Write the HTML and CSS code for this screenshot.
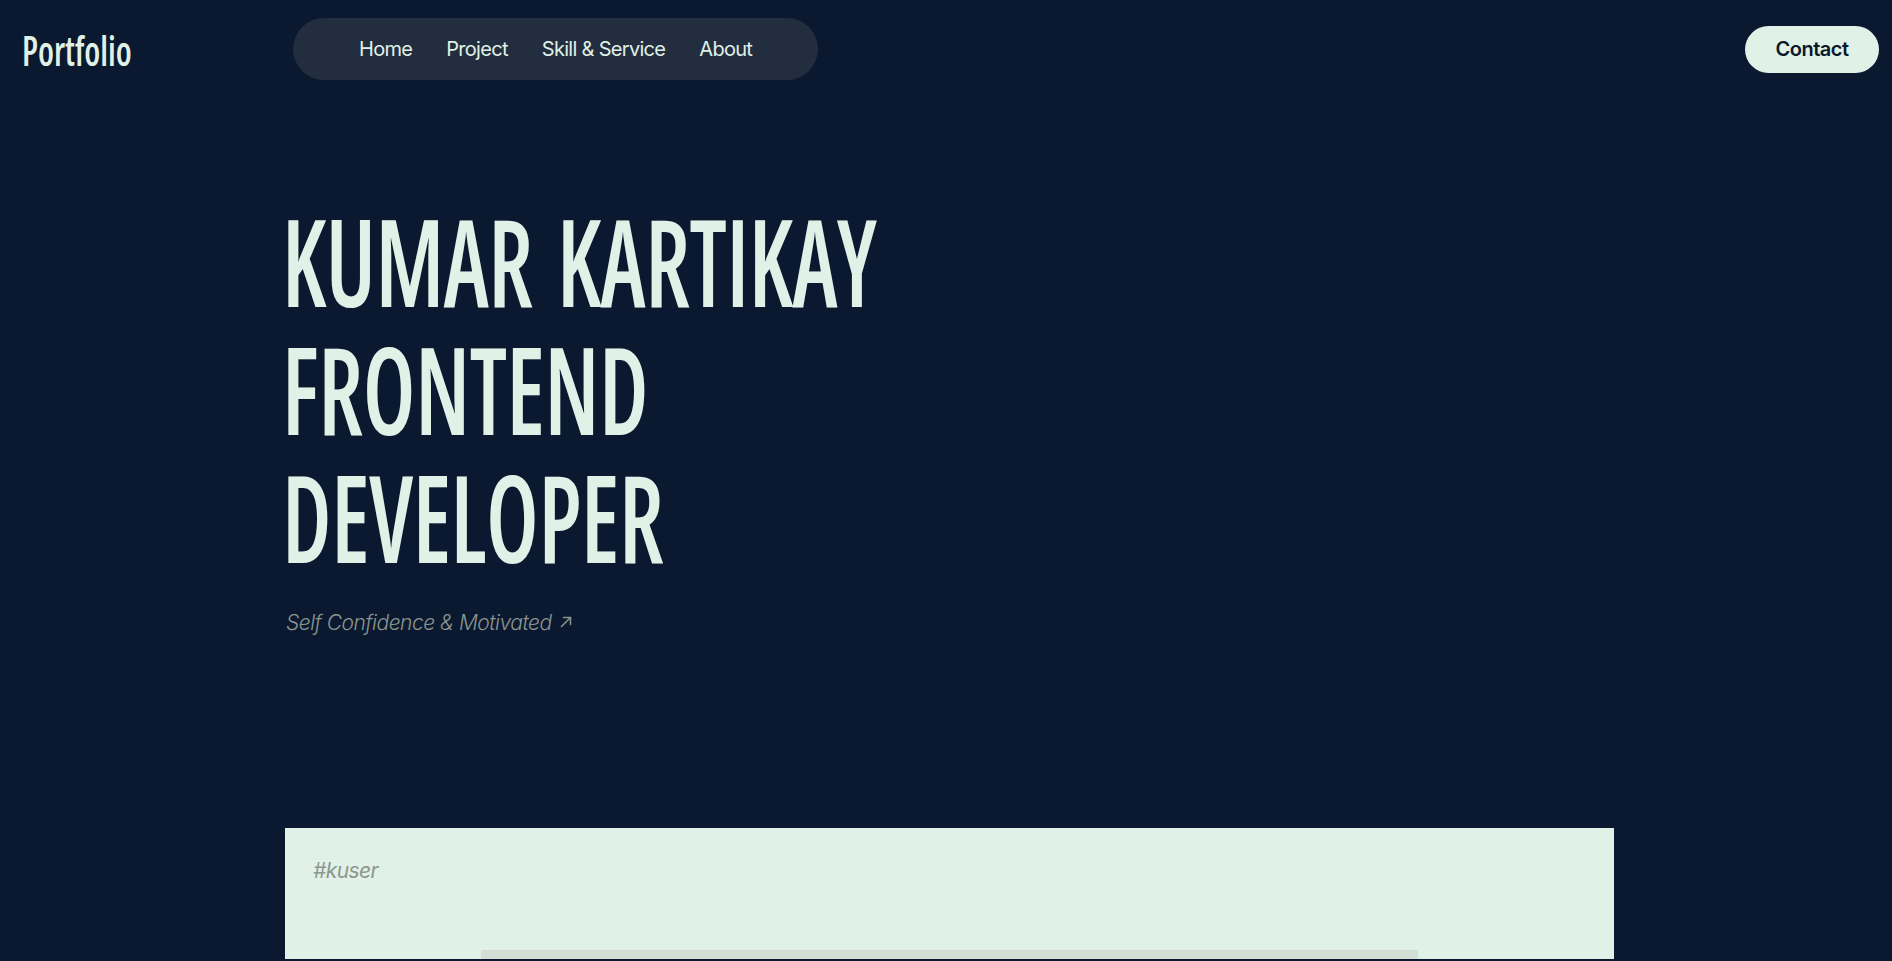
FILE: index.html
```html
<!DOCTYPE html>
<html lang="en">
<head>
<meta charset="utf-8">
<title>Portfolio</title>
<link rel="stylesheet" href="styles.css">
</head>
<body>
<header class="topbar">
  <div class="brand"><span class="brand-text">Portfolio</span></div>
  <nav class="nav-pill">
    <a class="nav-link" href="#">Home</a>
    <a class="nav-link" href="#">Project</a>
    <a class="nav-link" href="#">Skill &amp; Service</a>
    <a class="nav-link" href="#">About</a>
  </nav>
  <a class="contact-btn" href="#">Contact</a>
</header>
<main class="page">
  <section class="hero">
    <h1 class="hero-title">
      <span class="hero-line">KUMAR KARTIKAY</span>
      <span class="hero-line">FRONTEND</span>
      <span class="hero-line">DEVELOPER</span>
    </h1>
    <p class="hero-tag">Self Confidence &amp; Motivated
      <svg class="arrow" width="12" height="12" viewBox="0 0 12 12" fill="none" stroke="currentColor" stroke-width="1.5" stroke-linecap="round" stroke-linejoin="round"><path d="M1.5 10.5 L10.5 1.5"/><path d="M3.5 1.5 H10.5 V8.5"/></svg>
    </p>
  </section>
  <section class="card">
    <p class="card-tag">#kuser</p>
    <div class="card-frame"></div>
  </section>
</main>
</body>
</html>
```
FILE: styles.css
```css
html, body {
  margin: 0;
  padding: 0;
  background: #0a192f;
  height: 100%;
  overflow: hidden;
}
body {
  color: #e0f1e7;
  font-family: Inter, "Liberation Sans", sans-serif;
}
a { color: inherit; text-decoration: none; }

.topbar {
  display: flex;
  align-items: center;
  padding: 18px 13px 0 22px;
  height: 62px;
}
.brand {
  width: 271px;
  flex-shrink: 0;
  font-family: "Open Sans", sans-serif;
  font-stretch: 75%;
  font-weight: 600;
  font-size: 42px;
  color: #e0f1e7;
  line-height: 1;
  padding-top: 2px;
}
.brand-text {
  display: inline-block;
  transform: scaleX(0.82);
  transform-origin: left center;
}
.nav-pill {
  display: flex;
  align-items: center;
  gap: 34px;
  height: 62px;
  padding: 0 66px;
  background: #222e3f;
  border-radius: 31px;
}
.nav-link {
  font-size: 20px;
  letter-spacing: -0.7px;
  color: #e0f1e7;
}
.contact-btn {
  margin-left: auto;
  display: flex;
  align-items: center;
  justify-content: center;
  width: 134px;
  height: 47px;
  border-radius: 24px;
  background: #e0f1e7;
  color: #0b192c;
  font-size: 20px;
  font-weight: 600;
  letter-spacing: -0.5px;
}

.page {
  width: 1329px;
  margin-left: 285px;
}
.hero {
  padding-top: 116px;
}
.hero-title {
  margin: 0 0 0 -3px;
  font-family: "Open Sans", sans-serif;
  font-stretch: 75%;
  font-weight: 600;
  font-size: 122px;
  line-height: 128px;
  letter-spacing: -0.5px;
  word-spacing: 10px;
  color: #e0f1e7;
  transform: scaleX(0.76);
  transform-origin: left top;
}
.hero-line { display: block; white-space: nowrap; }
.hero-tag {
  margin: 28px 0 0 1px;
  display: flex;
  align-items: center;
  gap: 8px;
  font-size: 21px;
  line-height: 30px;
  font-style: italic;
  font-weight: 300;
  color: #8a958f;
  letter-spacing: -0.5px;
}
.arrow { margin-top: -2px; }

.card {
  margin-top: 190px;
  background: #e0f1e7;
  padding: 28px 28px 0;
  height: 103px;
  overflow: hidden;
}
.card-tag {
  margin: 0;
  font-size: 21px;
  line-height: 30px;
  font-style: italic;
  color: #8e9690;
  letter-spacing: -0.6px;
}
.card-frame {
  width: 937px;
  height: 200px;
  margin: 64px auto 0;
  background: #d4ded5;
}
```
